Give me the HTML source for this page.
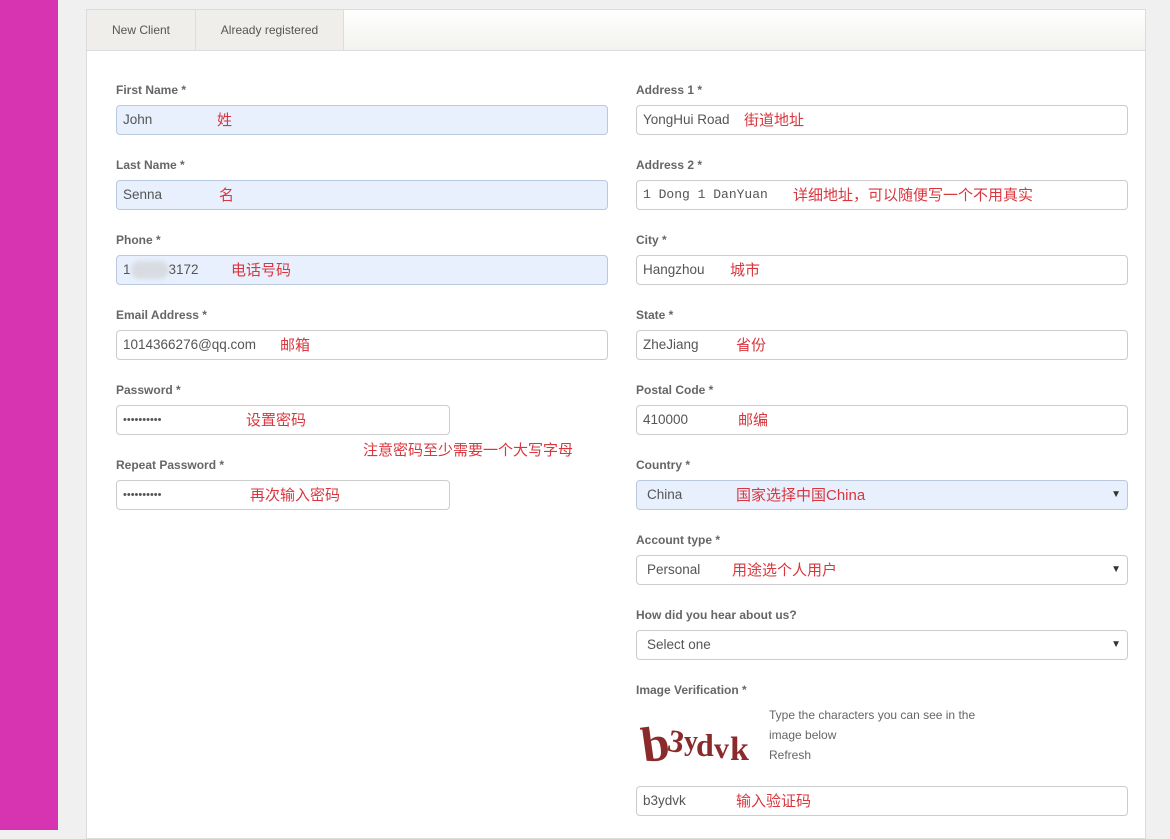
<!DOCTYPE html>
<html><head><meta charset="utf-8"><style>
*{margin:0;padding:0;box-sizing:border-box}
body{width:1170px;height:830px;overflow:hidden;background:#f0f0f0;font-family:"Liberation Sans","Noto Sans CJK SC",sans-serif;position:relative}
.bar{position:absolute;left:0;top:0;width:58px;height:830px;background:#d634b0}
.panel{position:absolute;left:86px;top:9px;width:1060px;height:830px;background:#fff;border:1px solid #dcdcdc}
.tabs{position:absolute;left:0;top:0;width:1058px;height:41px;background:linear-gradient(#fff,#f2f2ee);border-bottom:1px solid #ddd}
.tab{position:absolute;top:0;height:40px;background:#efeeea;border-right:1px solid #ddd;font-size:12px;color:#555;line-height:40px;text-align:center}
.lbl{position:absolute;font-size:12px;font-weight:bold;color:#666}
.in{position:absolute;height:30px;border:1px solid #ccc;border-radius:4px;background:#fff;font-size:13.5px;color:#555;line-height:28px;padding-left:6px}
.blue{background:#e8f0fe;border-color:#b9c8dc}
.cn{position:absolute;color:#d9363e;font-size:15px;top:0;line-height:29px}
.arr{position:absolute;right:6px;top:0;font-size:10px;color:#333}
.small{position:absolute;font-size:12px;color:#666;line-height:20px}
</style></head><body>
<div class="bar"></div>
<div class="panel">
<div class="tabs">
<div class="tab" style="left:0;width:109px">New Client</div>
<div class="tab" style="left:109px;width:148px">Already registered</div>
</div>
</div>

<div class="lbl" style="left:116px;top:83px">First Name *</div>
<div class="in blue" style="left:116px;top:105px;width:492px">John<span class="cn" style="left:100px">姓</span></div>
<div class="lbl" style="left:116px;top:158px">Last Name *</div>
<div class="in blue" style="left:116px;top:180px;width:492px">Senna<span class="cn" style="left:102px">名</span></div>
<div class="lbl" style="left:116px;top:233px">Phone *</div>
<div class="in blue" style="left:116px;top:255px;width:492px">1<span style="display:inline-block;width:38px;height:18px;background:#d8dce2;border-radius:9px;vertical-align:middle;filter:blur(2px)"></span>3172<span class="cn" style="left:114px">电话号码</span></div>
<div class="lbl" style="left:116px;top:308px">Email Address *</div>
<div class="in" style="left:116px;top:330px;width:492px">1014366276@qq.com<span class="cn" style="left:163px">邮箱</span></div>
<div class="lbl" style="left:116px;top:383px">Password *</div>
<div class="in" style="left:116px;top:405px;width:334px;font-size:11px">••••••••••<span class="cn" style="left:129px">设置密码</span></div>
<div style="position:absolute;left:363px;top:439px;color:#d9363e;font-size:15px">注意密码至少需要一个大写字母</div>
<div class="lbl" style="left:116px;top:458px">Repeat Password *</div>
<div class="in" style="left:116px;top:480px;width:334px;font-size:11px">••••••••••<span class="cn" style="left:133px">再次输入密码</span></div>

<div class="lbl" style="left:636px;top:83px">Address 1 *</div>
<div class="in" style="left:636px;top:105px;width:492px">YongHui Road<span class="cn" style="left:107px">街道地址</span></div>
<div class="lbl" style="left:636px;top:158px">Address 2 *</div>
<div class="in" style="left:636px;top:180px;width:492px;font-family:'Liberation Mono',monospace;font-size:13px">1 Dong 1 DanYuan<span class="cn" style="left:156px;font-family:'Liberation Sans','Noto Sans CJK SC',sans-serif">详细地址，可以随便写一个不用真实</span></div>
<div class="lbl" style="left:636px;top:233px">City *</div>
<div class="in" style="left:636px;top:255px;width:492px">Hangzhou<span class="cn" style="left:93px">城市</span></div>
<div class="lbl" style="left:636px;top:308px">State *</div>
<div class="in" style="left:636px;top:330px;width:492px">ZheJiang<span class="cn" style="left:99px">省份</span></div>
<div class="lbl" style="left:636px;top:383px">Postal Code *</div>
<div class="in" style="left:636px;top:405px;width:492px">410000<span class="cn" style="left:101px">邮编</span></div>
<div class="lbl" style="left:636px;top:458px">Country *</div>
<div class="in blue" style="left:636px;top:480px;width:492px;padding-left:10px">China<span class="cn" style="left:99px">国家选择中国China</span><span class="arr">▼</span></div>
<div class="lbl" style="left:636px;top:533px">Account type *</div>
<div class="in" style="left:636px;top:555px;width:492px;padding-left:10px">Personal<span class="cn" style="left:95px">用途选个人用户</span><span class="arr">▼</span></div>
<div class="lbl" style="left:636px;top:608px">How did you hear about us?</div>
<div class="in" style="left:636px;top:630px;width:492px;padding-left:10px">Select one<span class="arr">▼</span></div>
<div class="lbl" style="left:636px;top:683px">Image Verification *</div>
<svg style="position:absolute;left:640px;top:708px" width="110" height="60"><g fill="#8b2a2a" font-family="Liberation Serif,serif" font-weight="bold">
<text x="2" y="52" font-size="50" transform="rotate(-8 20 40)">b</text><text x="27" y="44" font-size="32" transform="rotate(10 35 40)">3</text><text x="44" y="42" font-size="28">y</text><text x="56" y="48" font-size="32">d</text><text x="74" y="50" font-size="30">v</text><text x="90" y="52" font-size="34">k</text></g></svg>
<div class="small" style="left:769px;top:705px">Type the characters you can see in the<br>image below<br>Refresh</div>
<div class="in" style="left:636px;top:786px;width:492px">b3ydvk<span class="cn" style="left:99px">输入验证码</span></div>
</body></html>
